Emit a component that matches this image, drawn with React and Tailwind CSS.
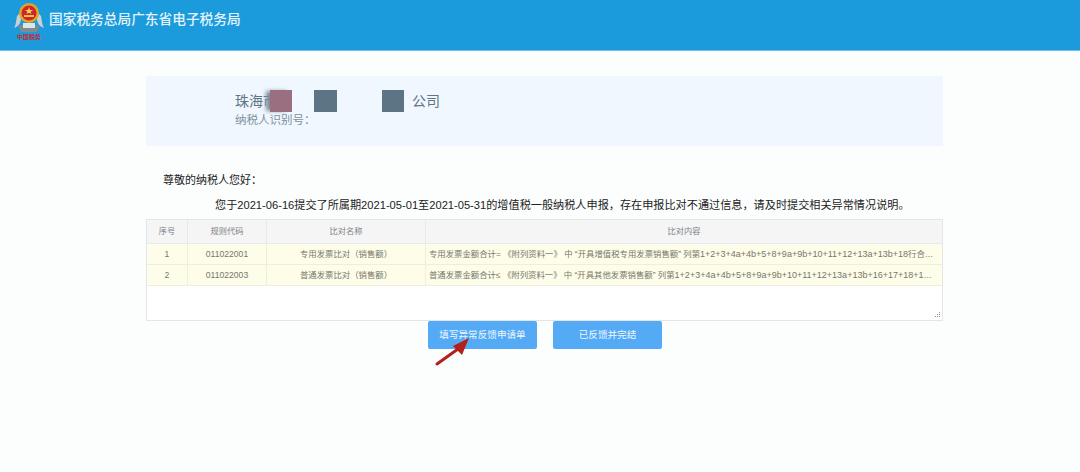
const cjk = "font-['Liberation_Sans','Noto_Sans_CJK_SC',sans-serif]"

const rows = [
  {
    no: '1',
    code: '011022001',
    name: '专用发票比对（销售额）',
    before: '专用发票金额合计= 《附列资料一》 中 “开具增值税专用发票销售额” 列第',
    formula: '1+2+3+4a+4b+5+8+9a+9b+10+11+12+13a+13b+18',
    after: '行合计数',
  },
  {
    no: '2',
    code: '011022003',
    name: '普通发票比对（销售额）',
    before: '普通发票金额合计≤ 《附列资料一》 中 “开具其他发票销售额” 列第',
    formula: '1+2+3+4a+4b+5+8+9a+9b+10+11+12+13a+13b+16+17+18+19',
    after: '行合计数',
  },
]

function Logo() {
  return (
    <div className="w-[40px] flex flex-col items-center">
      <svg width="32" height="30" viewBox="0 0 32 30">
        <path d="M1 25 C7 23 9 18 8 9 L4 13 C3 18 3 22 1 25Z" fill="#c9cfd2" />
        <path d="M31 25 C25 23 23 18 24 9 L28 13 C29 18 29 22 31 25Z" fill="#c9cfd2" />
        <path d="M5 22 L27 22 L24 29 L8 29Z" fill="#7d8b92" />
        <rect x="10" y="20" width="12" height="5" fill="#dfe4e6" />
        <circle cx="16" cy="10" r="10" fill="#d9a928" />
        <circle cx="16" cy="10" r="7.5" fill="#d3232a" />
        <path d="M11 12 L21 12 L21 14 L11 14Z" fill="#e8c34a" />
        <path d="M16 4 L17 7 L20 7 L17.6 8.8 L18.5 11 L16 9.8 L13.5 11 L14.4 8.8 L12 7 L15 7Z" fill="#f2d15a" />
      </svg>
      <span className="text-[6px] leading-[8px] font-bold text-[#c8282e] whitespace-nowrap">中国税务</span>
    </div>
  )
}

export default function App() {
  return (
    <div className={`${cjk} w-[1080px] h-[472px] overflow-hidden bg-[#fcfefe] relative`}>
      {/* Header */}
      <header className="h-[51px] bg-[#1b9bdc] border-b border-[#6fc0ea] flex items-start pl-[9px] pt-[3px]">
        <Logo />
        <h1 className="mt-[7px] text-[13.7px] leading-[20px] font-medium text-[#e4f3fb]">
          国家税务总局广东省电子税务局
        </h1>
      </header>

      <main className="w-[797px] ml-[146px]">
        {/* Taxpayer card */}
        <div className="mt-[25px] h-[70px] bg-[#f0f7fe] pl-[89px] pt-[14px]">
          <div className="flex items-center h-[22px] text-[14px] text-[#5f7484]">
            <span className="whitespace-nowrap">珠海市</span>
            <span className="w-[22px] h-[22px] -ml-[7px] bg-[#9a6f80] shadow-[-5px_0_4px_-1px_#7d8d99]" />
            <span className="w-[22px]" />
            <span className="w-[23px] h-[22px] bg-[#5d7484]" />
            <span className="w-[45px]" />
            <span className="w-[22px] h-[22px] bg-[#5d7484]" />
            <span className="ml-[8px]">公司</span>
          </div>
          <div className="text-[11.5px] leading-[16px] text-[#7f919d]">纳税人识别号：</div>
        </div>

        {/* Notice */}
        <p className="mt-[25px] ml-[17px] text-[11px] leading-[18px] text-[#222]">尊敬的纳税人您好：</p>
        <p className="mt-[7px] ml-[69px] text-[11.15px] leading-[18px] text-[#222] whitespace-nowrap">
          您于2021-06-16提交了所属期2021-05-01至2021-05-31的增值税一般纳税人申报，存在申报比对不通过信息，请及时提交相关异常情况说明。
        </p>

        {/* Result table */}
        <div className="mt-[5px] h-[102px] bg-white border border-[#e3e6e8] relative">
          <div className="grid grid-cols-[41px_79px_159px_1fr] h-[24px] bg-[#f5f5f6] border-b border-[#e8e9ea] text-[8.2px] text-[#7a7f84] text-center leading-[23px]">
            <div className="border-r border-[#e8e9ea]">序号</div>
            <div className="border-r border-[#e8e9ea]">规则代码</div>
            <div className="border-r border-[#e8e9ea]">比对名称</div>
            <div>比对内容</div>
          </div>
          {rows.map((row) => (
            <div
              key={row.no}
              className="grid grid-cols-[41px_79px_159px_1fr] h-[21px] bg-[#fefde9] border-b border-[#eeeedd] text-[8.4px] text-[#77776a] text-center leading-[20px]"
            >
              <div className="border-r border-[#eeeedd] text-[8.6px]">{row.no}</div>
              <div className="border-r border-[#eeeedd] text-[8.6px]">{row.code}</div>
              <div className="border-r border-[#eeeedd]">{row.name}</div>
              <div className="text-left pl-[3px] pr-[7px] truncate">
                {row.before}
                <span className="text-[9px]">{row.formula}</span>
                {row.after}
              </div>
            </div>
          ))}
          <svg className="absolute right-[1px] bottom-[1px]" width="8" height="8" viewBox="0 0 8 8" fill="#8a8f94">
            <rect x="6" y="1" width="1" height="1" />
            <rect x="4" y="3" width="1" height="1" />
            <rect x="6" y="3" width="1" height="1" />
            <rect x="2" y="5" width="1" height="1" />
            <rect x="4" y="5" width="1" height="1" />
            <rect x="6" y="5" width="1" height="1" />
          </svg>
        </div>

        {/* Actions */}
        <div className="flex gap-[16px] ml-[282px]">
          <button className="w-[109px] h-[28px] rounded-[2px] bg-[#55aaf5] text-[#eef7ff] text-[9.6px]">填写异常反馈申请单</button>
          <button className="w-[109px] h-[28px] rounded-[2px] bg-[#55aaf5] text-[#eef7ff] text-[9.6px]">已反馈并完结</button>
        </div>
      </main>

      {/* Annotation arrow */}
      <svg className="absolute left-[434px] top-[336px]" width="40" height="32" viewBox="0 0 40 32">
        <path d="M3 28 L24 13" stroke="#b3201c" strokeWidth="3" strokeLinecap="round" />
        <path d="M35 2 L19 10 L28 19 Z" fill="#b3201c" />
      </svg>
    </div>
  )
}
